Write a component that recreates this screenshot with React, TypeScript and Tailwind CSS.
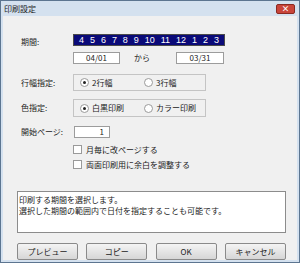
import React from "react";

const months = ["4", "5", "6", "7", "8", "9", "10", "11", "12", "1", "2", "3"];

function Radio({ checked, label }: { checked?: boolean; label: string }) {
  return (
    <label className="flex items-center gap-[3px] whitespace-nowrap">
      <span className="w-[9px] h-[9px] rounded-full border border-[#9a9a9a] bg-white flex items-center justify-center">
        {checked && <span className="w-[3px] h-[3px] rounded-full bg-[#222]" />}
      </span>
      <span>{label}</span>
    </label>
  );
}

function Check({ label }: { label: string }) {
  return (
    <div className="flex items-center gap-[4px] h-[15px] whitespace-nowrap">
      <span className="w-[9px] h-[9px] border border-[#9a9a9a] bg-white" />
      <span>{label}</span>
    </div>
  );
}

function Btn({ children }: { children: React.ReactNode }) {
  return (
    <button className="w-[61px] h-[17px] border border-[#8a8a8a] rounded-[2px] bg-gradient-to-b from-[#f4f4f4] to-[#d6d6d6] text-[8px] text-[#222] leading-none flex items-center justify-center whitespace-nowrap">
      {children}
    </button>
  );
}

export default function App() {
  return (
    <div
      className="w-[300px] h-[263px] bg-[#f0f0f0] border border-[#5c7590] flex flex-col text-[8px] text-[#1a1a1a] leading-none"
      style={{ fontFamily: '"Noto Sans CJK JP", "Liberation Sans", sans-serif' }}
    >
      {/* title bar */}
      <div className="h-[16px] bg-[#d4e1ef] flex items-center justify-between pl-[3px] pr-[4px]">
        <span className="text-[8px] text-[#1e1e1e]">印刷設定</span>
        <span className="w-[19px] h-[10px] bg-[#c9453a] border border-[#8a2a22] rounded-[2px] flex items-center justify-center text-white text-[8px] font-bold leading-none">
          ×
        </span>
      </div>

      <div className="flex-1 flex flex-col border-x-[2px] border-b-[2px] border-[#d4e1ef] pt-[18px] pl-[18px] pr-[14px]">
        {/* 期間 */}
        <div className="flex items-center h-[12px]">
          <span className="w-[52px] pt-[4px] whitespace-nowrap">期間:</span>
          <div
            className="w-[152px] h-[12px] bg-[#0a0a78] border border-[#4a4a4a] flex items-center justify-around px-[2px] text-white text-[9px]"
            style={{ fontFamily: '"Liberation Sans", sans-serif' }}
          >
            {months.map((m, i) => (
              <span key={i}>{m}</span>
            ))}
          </div>
        </div>
        <div className="flex items-center h-[12px] mt-[6px] pl-[52px] whitespace-nowrap">
          <div className="w-[47px] h-[12px] bg-white border border-[#9c9c9c] flex items-center justify-center">04/01</div>
          <span className="ml-[14px] w-[42px]">から</span>
          <div className="w-[48px] h-[12px] bg-white border border-[#9c9c9c] flex items-center justify-center">03/31</div>
        </div>

        {/* 行幅指定 */}
        <div className="flex items-center h-[17px] mt-[10px]">
          <span className="w-[52px] whitespace-nowrap">行幅指定:</span>
          <div className="w-[133px] h-[17px] border border-[#c4c4c4] flex items-center pl-[6px]">
            <div className="w-[64px]">
              <Radio checked label="2行幅" />
            </div>
            <Radio label="3行幅" />
          </div>
        </div>

        {/* 色指定 */}
        <div className="flex items-center h-[18px] mt-[8px]">
          <span className="w-[52px] whitespace-nowrap">色指定:</span>
          <div className="w-[133px] h-[18px] border border-[#c4c4c4] flex items-center pl-[6px]">
            <div className="w-[64px]">
              <Radio checked label="白黒印刷" />
            </div>
            <Radio label="カラー印刷" />
          </div>
        </div>

        {/* 開始ページ */}
        <div className="flex items-center h-[12px] mt-[9px]">
          <span className="w-[53px] whitespace-nowrap">開始ページ:</span>
          <div className="w-[36px] h-[12px] bg-white border border-[#9c9c9c] flex items-center justify-end pr-[5px]">1</div>
        </div>

        <div className="flex flex-col pl-[52px] mt-[4px]">
          <Check label="月毎に改ページする" />
          <Check label="両面印刷用に余白を調整する" />
        </div>

        {/* 説明 */}
        <div className="-ml-[4px] mt-[19px] w-[269px] h-[42px] bg-white border border-[#8c8c8c] px-[1px] pt-[2px] leading-[11px]">
          <p>印刷する期間を選択します。</p>
          <p>選択した期間の範囲内で日付を指定することも可能です。</p>
        </div>

        {/* buttons */}
        <div className="flex -ml-[4px] w-[269px] justify-between mt-[10px]">
          <Btn>プレビュー</Btn>
          <Btn>コピー</Btn>
          <Btn>OK</Btn>
          <Btn>キャンセル</Btn>
        </div>
      </div>
    </div>
  );
}
